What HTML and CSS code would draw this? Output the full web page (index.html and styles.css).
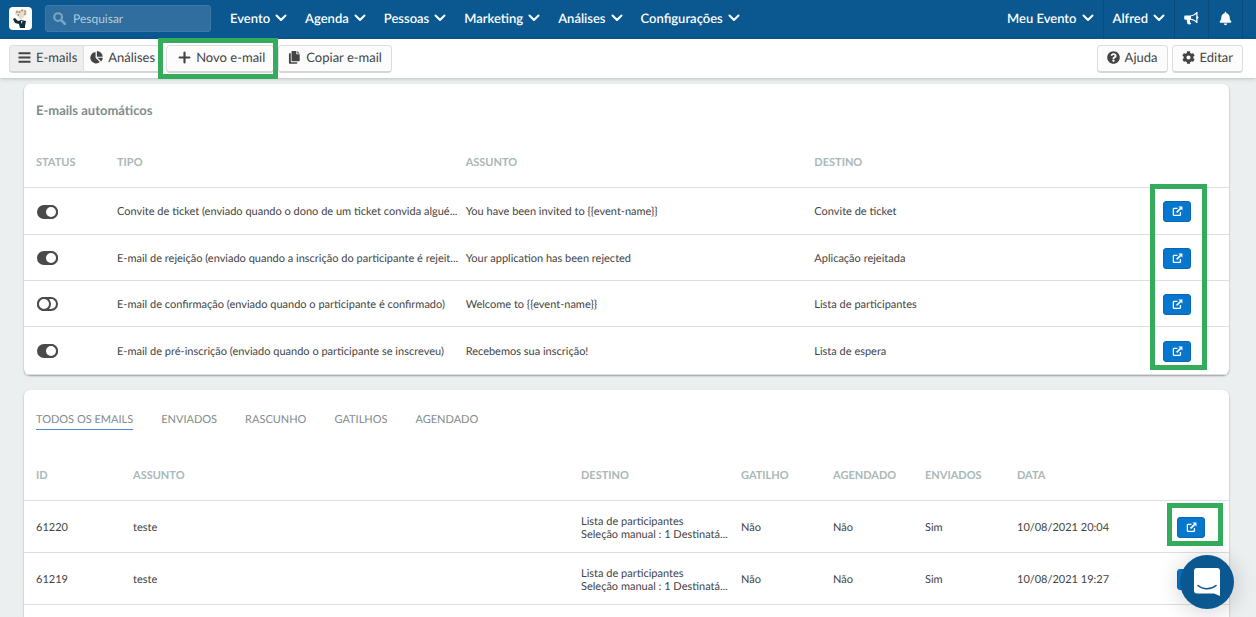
FILE: index.html
```
<!DOCTYPE html>
<html lang="pt">
<head>
    <meta charset="UTF-8">
    <meta name="viewport" content="width=device-width, initial-scale=1.0">
    <title>E-mails</title>
    <link rel="stylesheet" href="styles.css">
</head>
<body>

    <!-- Icons -->
    <svg class="sprite" aria-hidden="true">
        <symbol id="chevron" viewBox="0 0 12 8"><path d="M1.500 1.500L6 6l4.500-4.500" fill="none" stroke="currentColor" stroke-width="2" stroke-linecap="round" stroke-linejoin="round"/></symbol>
        <symbol id="search" viewBox="0 0 14 14"><circle cx="5.500" cy="5.500" r="4.200" fill="none" stroke="currentColor" stroke-width="2.300"/><path d="M9 9l3.700 3.700" stroke="currentColor" stroke-width="2.800" stroke-linecap="round"/></symbol>
        <symbol id="bars" viewBox="0 0 12 12"><path d="M.5 2h11M.5 6h11M.5 10h11" stroke="currentColor" stroke-width="1.800"/></symbol>
        <symbol id="pie" viewBox="0 0 14 14"><path d="M6 1v6.300l4.600 4.600A6.200 6.200 0 1 1 6 1z"/><path d="M7.400 0a6.200 6.200 0 0 1 6.200 6.200H7.400z"/><path d="M8 7.400h5.800a6.200 6.200 0 0 1-1.800 4z"/></symbol>
        <symbol id="plus" viewBox="0 0 12 12"><path d="M6 1.500v9M1.500 6h9" stroke="currentColor" stroke-width="2" stroke-linecap="round"/></symbol>
        <symbol id="copy" viewBox="0 0 12 14"><path d="M3.600 0H8v3.600h3.600v6.600a.8.8 0 0 1-.8.8H3.600a.8.8 0 0 1-.8-.8V.8a.8.800 0 0 1 .8-.8z"/><path d="M9 0l2.600 2.700H9z"/><path d="M0 3.200a.8.8 0 0 1 .8-.8H2v8.600a1 1 0 0 0 1 1h6v.8a.8.8 0 0 1-.8.800H.8a.8.8 0 0 1-.8-.8z"/></symbol>
        <symbol id="help" viewBox="0 0 512 512"><path d="M504 256c0 136.997-111.043 248-248 248S8 392.997 8 256C8 119.083 119.043 8 256 8s248 111.083 248 248zM262.655 90c-54.497 0-89.255 22.957-116.549 63.758-3.536 5.286-2.353 12.415 2.715 16.258l34.699 26.310c5.205 3.947 12.621 3.008 16.665-2.122 17.864-22.658 30.113-35.797 57.303-35.797 20.429 0 45.698 13.148 45.698 32.958 0 14.976-12.363 22.667-32.534 33.976C247.128 238.528 216 254.941 216 296v4c0 6.627 5.373 12 12 12h56c6.627 0 12-5.373 12-12v-1.333c0-28.462 83.186-29.647 83.186-106.667 0-58.002-60.165-102-116.531-102zM256 338c-25.365 0-46 20.635-46 46 0 25.364 20.635 46 46 46s46-20.636 46-46c0-25.365-20.635-46-46-46z"/></symbol>
        <symbol id="cog" viewBox="0 0 512 512"><path d="M487.400 315.700l-42.600-24.600c4.300-23.200 4.300-47 0-70.200l42.600-24.600c4.900-2.800 7.100-8.600 5.500-14-11.100-35.600-30-67.800-54.700-94.600-3.800-4.100-10-5.100-14.800-2.300L380.800 110c-17.900-15.400-38.500-27.300-60.800-35.100V25.800c0-5.600-3.900-10.500-9.400-11.700-36.700-8.200-74.300-7.800-109.200 0-5.500 1.200-9.400 6.100-9.400 11.700V75c-22.200 7.900-42.800 19.800-60.800 35.100L88.700 85.500c-4.900-2.800-11-1.900-14.800 2.300-24.700 26.700-43.600 58.900-54.700 94.600-1.700 5.400.6 11.200 5.500 14L67.300 221c-4.300 23.200-4.300 47 0 70.200l-42.600 24.600c-4.900 2.800-7.100 8.600-5.500 14 11.100 35.600 30 67.800 54.700 94.600 3.800 4.100 10 5.100 14.800 2.300l42.600-24.600c17.900 15.400 38.500 27.300 60.800 35.100v49.200c0 5.600 3.900 10.500 9.400 11.700 36.700 8.200 74.300 7.800 109.200 0 5.500-1.200 9.400-6.100 9.400-11.700v-49.200c22.200-7.900 42.800-19.800 60.800-35.100l42.600 24.600c4.900 2.800 11 1.900 14.800-2.300 24.700-26.700 43.600-58.900 54.700-94.600 1.500-5.500-.7-11.300-5.600-14.100zM256 336c-44.100 0-80-35.900-80-80s35.900-80 80-80 80 35.900 80 80-35.900 80-80 80z"/></symbol>
        <symbol id="bullhorn" viewBox="0 0 15 13"><path fill-rule="evenodd" d="M12.500 0h1v4.300a1.300 1.300 0 0 1 0 2.500V11h-1C11 9.300 8.800 8.100 6.300 7.800c-.8.400-.7 1.300-.1 1.800-.5.700.1 1.400 1 2-.6 1.200-2.700 1.200-3.600.5-.4-1.500-1.100-2.800-.7-4.400H1.500A1.300 1.300 0 0 1 .2 6.400V4.700a1.300 1.300 0 0 1 1.300-1.300h4C8.500 3.400 11 2 12.500 0zM12.200 2C10.700 3.300 8.900 4.100 7 4.300v2.500c1.900.3 3.700 1.100 5.200 2.300z"/></symbol>
        <symbol id="bell" viewBox="-20 -30 488 572"><path d="M224 512c35.320 0 63.970-28.650 63.970-64H160.030c0 35.350 28.650 64 63.970 64zm215.390-149.710c-19.320-20.760-55.470-51.990-55.470-154.290 0-77.700-54.480-139.900-127.940-155.160V32c0-17.670-14.320-32-31.980-32s-31.980 14.330-31.980 32v20.840C118.560 68.100 64.080 130.300 64.080 208c0 102.300-36.150 133.530-55.470 154.290-6 6.450-8.660 14.160-8.610 21.710.11 16.400 12.980 32 32.100 32h383.800c19.120 0 32-15.600 32.100-32 .05-7.550-2.610-15.270-8.610-21.710z"/></symbol>
        <symbol id="external" viewBox="0 0 12 12"><path d="M6 2.500H2.200a.7.700 0 0 0-.7.700v6.300c0 .4.300.7.700.7h6.300c.4 0 .7-.3.700-.7V6.500" fill="none" stroke="currentColor" stroke-width="1.400"/><path d="M5 7l4.500-4.500" stroke="currentColor" stroke-width="1.800"/><path d="M7 .6h4.400v4.400z"/></symbol>
    </svg>

    <header class="navbar">
        <a class="logo" href="#" aria-label="Início">
            <svg viewBox="0 0 23 23">
                <path d="M6 6c0-3 3-4 4.500-2C13 1 18 2 18 5c0 3-2 3-3.500 5.500L12 13l-3-3C8 8.500 6 8 6 6z" fill="#e6e0cf"/>
                <g fill="#cf7d62"><circle cx="8" cy="5" r="1"/><circle cx="13" cy="3.500" r="1"/><circle cx="16" cy="7" r="1"/></g>
                <g fill="#7ba08b"><circle cx="10.500" cy="5" r="1"/><circle cx="16" cy="4.500" r="1"/><circle cx="9.500" cy="8" r="1"/></g>
                <circle cx="12" cy="9" r="2.200" fill="#f1d7c0"/>
                <path d="M4 12l2-1 3 3 3-1 5 1-1 5v2h-5l-1-4-4-1z" fill="#132d3b"/>
                <path d="M12 14l1.500 0-.7 3z" fill="#fff"/>
            </svg>
        </a>
        <label class="search">
            <svg class="icon"><use href="#search"/></svg>
            <input type="text" placeholder="Pesquisar" aria-label="Pesquisar">
        </label>
        <nav class="menu">
            <a href="#">Evento <svg class="chevron"><use href="#chevron"/></svg></a>
            <a href="#">Agenda <svg class="chevron"><use href="#chevron"/></svg></a>
            <a href="#">Pessoas <svg class="chevron"><use href="#chevron"/></svg></a>
            <a href="#">Marketing <svg class="chevron"><use href="#chevron"/></svg></a>
            <a href="#">Análises <svg class="chevron"><use href="#chevron"/></svg></a>
            <a href="#">Configurações <svg class="chevron"><use href="#chevron"/></svg></a>
        </nav>
        <nav class="user-menu">
            <a href="#">Meu Evento <svg class="chevron"><use href="#chevron"/></svg></a>
            <a href="#">Alfred <svg class="chevron"><use href="#chevron"/></svg></a>
            <a href="#" aria-label="Novidades"><svg class="icon"><use href="#bullhorn"/></svg></a>
            <a href="#" aria-label="Notificações"><svg class="icon"><use href="#bell"/></svg></a>
        </nav>
    </header>

    <div class="toolbar">
        <div class="btn-group">
            <button type="button" class="btn active"><svg class="icon"><use href="#bars"/></svg>E-mails</button>
            <button type="button" class="btn"><svg class="icon"><use href="#pie"/></svg>Análises</button>
        </div>
        <div class="highlight">
            <button type="button" class="btn btn-new"><svg class="icon"><use href="#plus"/></svg>Novo e-mail</button>
        </div>
        <button type="button" class="btn"><svg class="icon"><use href="#copy"/></svg>Copiar e-mail</button>
        <div class="toolbar-right">
            <button type="button" class="btn"><svg class="icon"><use href="#help"/></svg>Ajuda</button>
            <button type="button" class="btn"><svg class="icon"><use href="#cog"/></svg>Editar</button>
        </div>
    </div>

    <main class="content">
        <section class="card">
            <h2>E-mails automáticos</h2>
            <table class="auto-table">
                <thead>
                    <tr>
                        <th class="col-status">Status</th>
                        <th>Tipo</th>
                        <th>Assunto</th>
                        <th>Destino</th>
                        <th class="col-edit"></th>
                    </tr>
                </thead>
                <tbody>
                    <tr>
                        <td><input type="checkbox" class="toggle" aria-label="Convite de ticket" checked></td>
                        <td>Convite de ticket (enviado quando o dono de um ticket convida algué...</td>
                        <td>You have been invited to {{event-name}}</td>
                        <td>Convite de ticket</td>
                        <td><button type="button" class="btn-edit" aria-label="Abrir"><svg><use href="#external"/></svg></button></td>
                    </tr>
                    <tr>
                        <td><input type="checkbox" class="toggle" aria-label="E-mail de rejeição" checked></td>
                        <td>E-mail de rejeição (enviado quando a inscrição do participante é rejeit...</td>
                        <td>Your application has been rejected</td>
                        <td>Aplicação rejeitada</td>
                        <td><button type="button" class="btn-edit" aria-label="Abrir"><svg><use href="#external"/></svg></button></td>
                    </tr>
                    <tr>
                        <td><input type="checkbox" class="toggle" aria-label="E-mail de confirmação"></td>
                        <td>E-mail de confirmação (enviado quando o participante é confirmado)</td>
                        <td>Welcome to {{event-name}}</td>
                        <td>Lista de participantes</td>
                        <td><button type="button" class="btn-edit" aria-label="Abrir"><svg><use href="#external"/></svg></button></td>
                    </tr>
                    <tr>
                        <td><input type="checkbox" class="toggle" aria-label="E-mail de pré-inscrição" checked></td>
                        <td>E-mail de pré-inscrição (enviado quando o participante se inscreveu)</td>
                        <td>Recebemos sua inscrição!</td>
                        <td>Lista de espera</td>
                        <td><button type="button" class="btn-edit" aria-label="Abrir"><svg><use href="#external"/></svg></button></td>
                    </tr>
                </tbody>
            </table>
            <div class="frame frame-column"></div>
        </section>

        <section class="card card-list">
            <nav class="tabs">
                <a href="#" class="active">Todos os emails</a>
                <a href="#">Enviados</a>
                <a href="#">Rascunho</a>
                <a href="#">Gatilhos</a>
                <a href="#">Agendado</a>
            </nav>
            <table class="list-table">
                <thead>
                    <tr>
                        <th class="col-id">ID</th>
                        <th>Assunto</th>
                        <th class="col-wide">Destino</th>
                        <th class="col-flag">Gatilho</th>
                        <th class="col-flag">Agendado</th>
                        <th class="col-flag">Enviados</th>
                        <th class="col-wide">Data</th>
                        <th class="col-open"></th>
                    </tr>
                </thead>
                <tbody>
                    <tr>
                        <td>61220</td>
                        <td>teste</td>
                        <td>Lista de participantes<br>Seleção manual : 1 Destinatá...</td>
                        <td>Não</td>
                        <td>Não</td>
                        <td>Sim</td>
                        <td>10/08/2021 20:04</td>
                        <td class="cell-open">
                            <button type="button" class="btn-edit" aria-label="Abrir"><svg><use href="#external"/></svg></button>
                            <div class="frame frame-cell"></div>
                        </td>
                    </tr>
                    <tr>
                        <td>61219</td>
                        <td>teste</td>
                        <td>Lista de participantes<br>Seleção manual : 1 Destinatá...</td>
                        <td>Não</td>
                        <td>Não</td>
                        <td>Sim</td>
                        <td>10/08/2021 19:27</td>
                        <td><button type="button" class="btn-edit" aria-label="Abrir"><svg><use href="#external"/></svg></button></td>
                    </tr>
                </tbody>
            </table>
        </section>
    </main>

    <button type="button" class="chat" aria-label="Abrir chat">
        <svg viewBox="0 0 28 30">
            <path d="M4 1h20a3 3 0 0 1 3 3v25L21 26.500H4a3 3 0 0 1-3-3V4a3 3 0 0 1 3-3z" fill="#fff"/>
            <path d="M5 18.500c5 4.300 13 4.300 18 0" fill="none" stroke="#0a588f" stroke-width="1.600" stroke-linecap="round"/>
        </svg>
    </button>

</body>
</html>
```
FILE: styles.css
```
*, *::before, *::after {
    box-sizing: border-box;
}
body {
    display: flex;
    flex-direction: column;
    height: 100vh;
    margin: 0;
    overflow: hidden;
    background-color: #ebeff0;
    color: #444;
    font-family: Lato, sans-serif;
    font-size: 11px;
    text-rendering: geometricPrecision;
}
a {
    color: inherit;
    text-decoration: none;
}
button, input {
    font-family: inherit;
    text-rendering: inherit;
}
svg {
    flex: none;
    fill: currentColor;
}
.sprite {
    position: absolute;
    width: 0;
    height: 0;
}
.icon {
    width: 13px;
    height: 13px;
}

/* Top bar */
.navbar {
    display: flex;
    flex: none;
    align-items: center;
    height: 39px;
    padding: 0 13px 2px 9px;
    background-color: #0a588f;
    color: #fff;
    font-size: 13px;
    font-weight: 600;
}
.logo {
    width: 23px;
    height: 23px;
    margin-right: 13px;
    border-radius: 4px;
    background-color: #fff;
}
.logo svg {
    display: block;
}
.search {
    display: flex;
    align-items: center;
    gap: 7px;
    width: 166px;
    height: 27px;
    padding: 0 7px;
    border: 1px solid #3f7ba8;
    border-radius: 3px;
    background-color: #2f6e9e;
}
.search .icon {
    color: #7ba5c4;
}
.search input {
    width: 100%;
    min-width: 0;
    padding: 0;
    border: 0;
    outline: 0;
    background: none;
    color: #fff;
    font-size: 12px;
}
.search input::placeholder {
    color: #b4cbdd;
}
.menu {
    display: flex;
    gap: 18px;
    margin-left: 19px;
}
.menu a, .user-menu a {
    display: flex;
    align-items: center;
    gap: 5px;
    padding-bottom: 2px;
}
.chevron {
    width: 12px;
    height: 8px;
}
.user-menu {
    display: flex;
    height: 39px;
    margin: 0 0 -2px auto;
}
.user-menu a {
    padding: 0 9px 3px;
    border-right: 1px solid #084b7c;
}
.user-menu .icon {
    width: 15px;
    height: 15px;
}

/* Toolbar */
.toolbar {
    display: flex;
    flex: none;
    gap: 4px;
    height: 39px;
    padding: 6px 13px 5px 9px;
    background-color: #fff;
    box-shadow: 0 1px 4px rgba(0, 0, 0, 0.2);
    z-index: 1;
}
.btn {
    display: flex;
    align-items: center;
    gap: 5px;
    height: 28px;
    padding: 0 9px 3px;
    border: 1px solid #ddd;
    border-bottom: 2px solid #d5d5d5;
    border-radius: 4px;
    background-color: #fcfcfc;
    color: #444;
    font-size: 13px;
    white-space: nowrap;
    cursor: pointer;
}
.btn-new {
    padding: 0 8px 3px 11px;
}
.btn-group {
    display: flex;
}
.btn-group .btn {
    padding: 0 6px 3px;
    border-radius: 0 4px 4px 0;
}
.btn-group .active {
    padding-left: 8px;
    border-right: 0;
    border-radius: 4px 0 0 4px;
    background-color: #eee;
}
.toolbar-right {
    display: flex;
    gap: 4px;
    margin-left: auto;
}

/* Green markers */
.highlight {
    position: relative;
}
.highlight::after {
    content: "";
    position: absolute;
    inset: -7px -4px -6px -8px;
    border: 5px solid #34ac5c;
    pointer-events: none;
}
.frame {
    position: absolute;
    border: 5px solid #34ac5c;
    pointer-events: none;
}
.frame-column {
    top: 100px;
    right: 22px;
    bottom: 5px;
    width: 57px;
}
.frame-cell {
    inset: 2px 6px 6px 2px;
}

/* Cards */
.content {
    display: flex;
    flex: 1;
    flex-direction: column;
    gap: 15px;
    min-height: 0;
    padding: 6px 27px 0 24px;
}
.card {
    position: relative;
    flex: none;
    border-radius: 6px;
    background-color: #fff;
    box-shadow: 0 1px 2px rgba(0, 0, 0, 0.35);
}
.card-list {
    flex: 1 0 auto;
    border-radius: 6px 6px 0 0;
}
.card h2 {
    margin: 0;
    padding: 18px 12px;
    color: #7f8c8d;
    font-size: 13px;
    line-height: 16px;
}
table {
    width: 100%;
    border-collapse: collapse;
    table-layout: fixed;
}
th, td {
    padding: 2px 0 0 12px;
    border-bottom: 1px solid #dcdfe0;
    text-align: left;
    white-space: nowrap;
}
th {
    height: 51px;
    color: #aab7b8;
    text-transform: uppercase;
}
td {
    line-height: 13px;
}
.auto-table td {
    height: 46px;
}
.auto-table tbody tr:first-child td {
    height: 47px;
}
.auto-table tbody tr:last-child td {
    height: 48px;
}
.list-table td {
    height: 52px;
}
.col-status {
    width: 81px;
}
.col-edit {
    width: 78px;
}
.col-id {
    width: 97px;
}
.col-wide {
    width: 160px;
}
.col-flag {
    width: 92px;
}
.col-open {
    width: 64px;
}
.cell-open {
    position: relative;
}
.btn-edit {
    display: flex;
    align-items: center;
    justify-content: center;
    width: 28px;
    height: 21px;
    padding: 0;
    border: 1px solid #0a66b0;
    border-radius: 3px;
    background-color: #0677ce;
    color: #fff;
    cursor: pointer;
}
.btn-edit svg {
    width: 11px;
    height: 11px;
}
.toggle {
    display: block;
    appearance: none;
    width: 21px;
    height: 14px;
    margin: 0 1px;
    border: 2px solid #4a4a4a;
    border-radius: 7px;
    background-color: #fff;
    cursor: pointer;
}
.toggle::before {
    content: "";
    display: block;
    width: 14px;
    height: 14px;
    margin: -2px;
    border: 2px solid #4a4a4a;
    border-radius: 50%;
    background-color: #fff;
}
.toggle:checked {
    background-color: #4a4a4a;
}
.toggle:checked::before {
    margin-left: 5px;
}

/* Tabs */
.tabs {
    display: flex;
    gap: 28px;
    padding: 21px 12px 20px;
    color: #7f8c8d;
    text-transform: uppercase;
}
.tabs a {
    padding-bottom: 1px;
    border-bottom: 1px solid transparent;
    line-height: 17px;
}
.tabs .active {
    border-color: #4a87d8;
}

/* Chat launcher */
.chat {
    position: fixed;
    right: 22px;
    bottom: 8px;
    z-index: 2;
    display: flex;
    align-items: center;
    justify-content: center;
    width: 54px;
    height: 54px;
    padding: 0;
    border: 0;
    border-radius: 50%;
    background-color: #0a588f;
    box-shadow: 0 2px 24px rgba(0, 0, 0, 0.2);
    cursor: pointer;
}
.chat svg {
    width: 28px;
    height: 30px;
}
```
